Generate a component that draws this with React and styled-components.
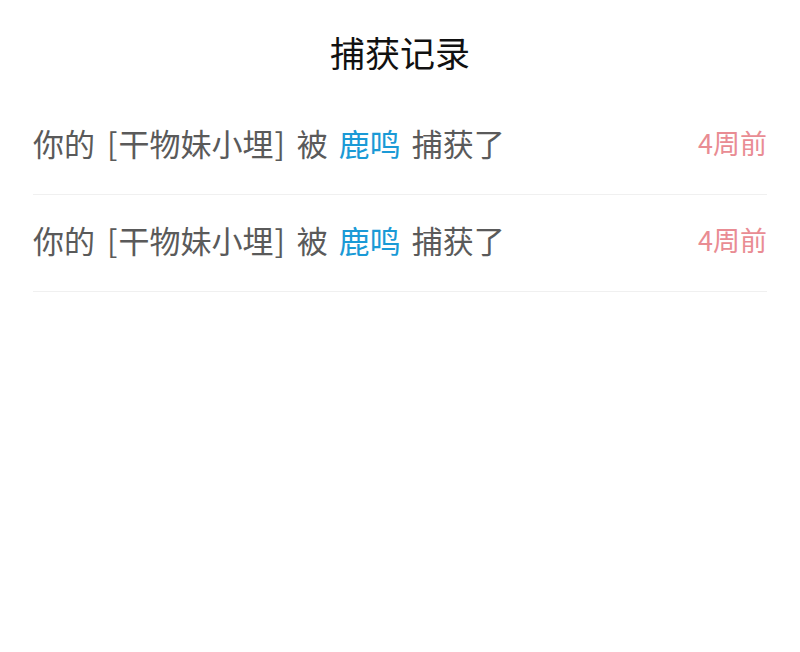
import React from "react";
import styled, { createGlobalStyle } from "styled-components";

const Global = createGlobalStyle`
  html, body { margin: 0; padding: 0; background: #fff; }
  body { font-family: "Noto Sans CJK SC", "Noto Sans", sans-serif; }
`;

const Page = styled.div`
  width: 800px;
  height: 652px;
  background: #fff;
  display: flex;
  flex-direction: column;
`;

const Header = styled.h1`
  margin: 0;
  height: 98px;
  padding-top: 19px;
  box-sizing: border-box;
  text-align: center;
  font-size: 35px;
  font-weight: 400;
  color: #111;
  line-height: 66px;
`;

const List = styled.div`
  padding: 0 33px;
  display: flex;
  flex-direction: column;
`;

const Row = styled.div`
  height: 97px;
  display: flex;
  align-items: center;
  justify-content: space-between;
  border-bottom: 1px solid #f0f0f0;
  box-sizing: border-box;
  padding-bottom: 7px;
`;

const Message = styled.span`
  font-size: 31px;
  color: #5a5a5a;
  white-space: pre;
  word-spacing: 4px;
`;

const Bracket = styled.span`
  margin: 0 1px;
`;

const User = styled.span`
  color: #1a9ad6;
`;

const Time = styled.span`
  font-size: 27px;
  color: #e98c93;
`;

const records = [
  { item: "干物妹小埋", user: "鹿鸣", time: "4周前" },
  { item: "干物妹小埋", user: "鹿鸣", time: "4周前" },
];

export default function App() {
  return (
    <Page>
      <Global />
      <Header>捕获记录</Header>
      <List>
        {records.map((r, i) => (
          <Row key={i}>
            <Message>
              你的 <Bracket>[</Bracket>{r.item}<Bracket>]</Bracket> 被 <User>{r.user}</User> 捕获了
            </Message>
            <Time>{r.time}</Time>
          </Row>
        ))}
      </List>
    </Page>
  );
}
